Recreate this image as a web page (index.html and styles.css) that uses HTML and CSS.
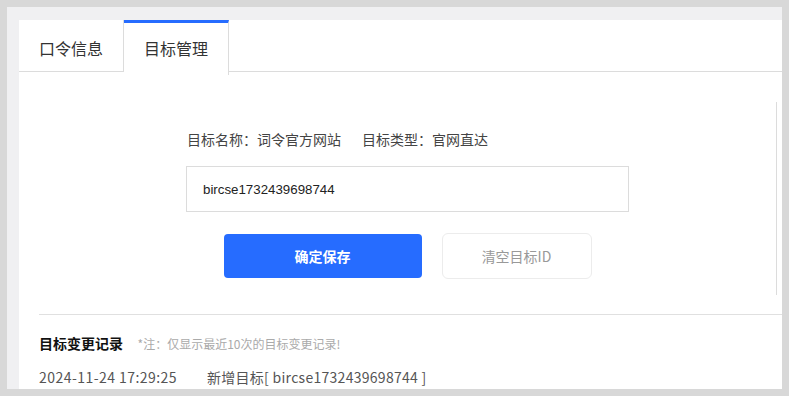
FILE: index.html
```html
<!DOCTYPE html>
<html lang="zh-CN">
<head>
    <meta charset="UTF-8">
    <meta name="viewport" content="width=device-width, initial-scale=1.0">
    <title>目标管理</title>
    <link rel="stylesheet" href="styles.css">
</head>
<body>

    <div class="panel">
        <div class="card">

            <!-- Tabs -->
            <div class="tabs">
                <div class="tab">口令信息</div>
                <div class="tab active">目标管理</div>
            </div>

            <!-- Target form -->
            <div class="target-box">
                <div class="target-form">
                    <div class="target-info">
                        <span>目标名称：词令官方网站</span>
                        <span>目标类型：官网直达</span>
                    </div>
                    <input type="text" class="target-input" value="bircse1732439698744">
                    <div class="button-row">
                        <button class="btn btn-primary">确定保存</button>
                        <button class="btn btn-plain">清空目标ID</button>
                    </div>
                </div>
            </div>

            <!-- History -->
            <div class="history">
                <div class="history-head">
                    <span class="history-title">目标变更记录</span>
                    <span class="history-note">*注：仅显示最近10次的目标变更记录!</span>
                </div>
                <div class="history-row">
                    <span class="history-time">2024-11-24 17:29:25</span>
                    <span class="history-text">新增目标[ bircse1732439698744 ]</span>
                </div>
            </div>

        </div>
    </div>

</body>
</html>
```

FILE: styles.css
```css
html, body {
    margin: 0;
    padding: 0;
    height: 100%;
}

body {
    background: #d8d8d8;
    font-family: "Noto Sans CJK SC", "Noto Sans", sans-serif;
    color: #333;
    padding: 7px;
    box-sizing: border-box;
    overflow: hidden;
}

.panel {
    background: #f0f0f2;
    height: 382px;
    padding: 13px 0 0 12px;
    box-sizing: border-box;
    overflow: hidden;
}

.card {
    background: #fff;
    height: 369px;
    overflow: hidden;
}

/* Tabs */
.tabs {
    display: flex;
    height: 52px;
    border-bottom: 1px solid #dcdcdc;
    box-sizing: border-box;
}

.tab {
    width: 104px;
    border-right: 1px solid #dcdcdc;
    padding-top: 6px;
    line-height: 45px;
    text-align: center;
    font-size: 16px;
    color: #333;
}

.tab.active {
    border-top: 3px solid #266cff;
    padding-top: 3px;
    height: 49px;
    background: #fff;
    margin-bottom: -1px;
}

/* Target form */
.target-box {
    width: 758px;
    height: 193px;
    margin-top: 30px;
    border-right: 1px solid #dcdcdc;
    box-sizing: border-box;
    padding: 27px 0 0 167px;
}

.target-form {
    width: 443px;
}

.target-info {
    display: flex;
    gap: 21px;
    font-size: 14px;
    line-height: 20px;
    color: #444;
    padding-left: 1px;
}

.target-input {
    display: block;
    width: 443px;
    height: 46px;
    margin: 17px 0 0;
    padding: 0 16px;
    border: 1px solid #dcdcdc;
    box-sizing: border-box;
    font-family: "Liberation Sans", Arial, sans-serif;
    font-size: 13.3px;
    color: #222;
    outline: none;
}

.button-row {
    display: flex;
    justify-content: center;
    align-items: center;
    gap: 20px;
    margin-top: 21px;
    height: 46px;
}

.btn {
    font-family: "Noto Sans CJK SC", "Noto Sans", sans-serif;
    font-size: 14px;
    cursor: pointer;
    box-sizing: border-box;
}

.btn-primary {
    width: 198px;
    height: 44px;
    background: #266cff;
    border: none;
    border-radius: 4px;
    color: #fff;
    font-weight: bold;
}

.btn-plain {
    width: 150px;
    height: 46px;
    background: #fff;
    border: 1px solid #ececec;
    border-radius: 6px;
    color: #999;
}

/* History */
.history {
    margin: 19px 0 0 20px;
    border-top: 1px solid #e0e0e0;
    padding-top: 17px;
}

.history-head {
    line-height: 20px;
}

.history-title {
    font-size: 14px;
    font-weight: bold;
    color: #111;
}

.history-note {
    font-size: 12px;
    color: #aaa;
    margin-left: 11px;
}

.history-row {
    display: flex;
    margin-top: 13px;
    line-height: 20px;
    font-size: 14px;
    color: #555;
}

.history-time {
    width: 168px;
    letter-spacing: 0.45px;
}

.history-text {
    letter-spacing: 0.28px;
}
```
